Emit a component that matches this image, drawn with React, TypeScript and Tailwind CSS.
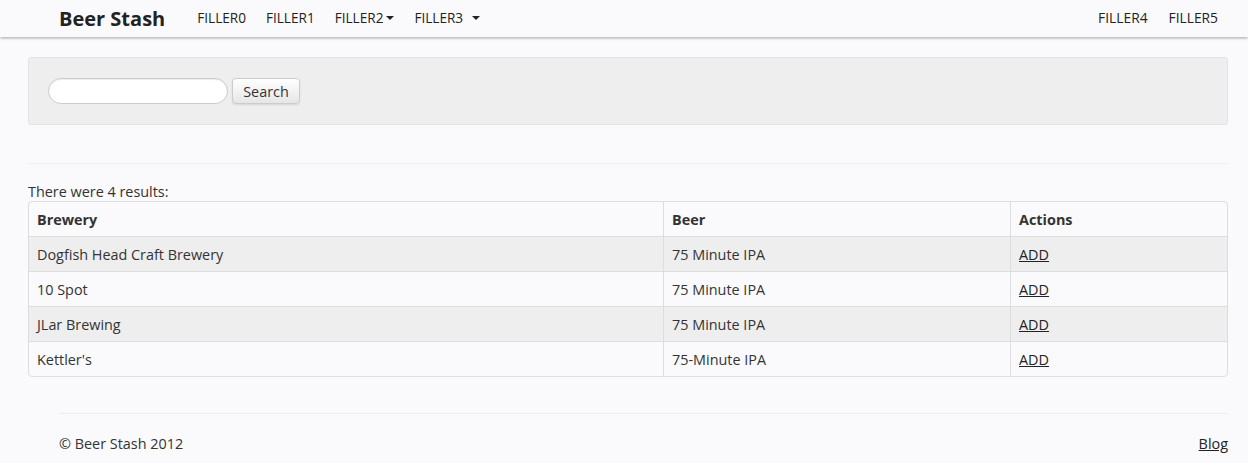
import React from "react";

const rows = [
  { brewery: "Dogfish Head Craft Brewery", beer: "75 Minute IPA" },
  { brewery: "10 Spot", beer: "75 Minute IPA" },
  { brewery: "JLar Brewing", beer: "75 Minute IPA" },
  { brewery: "Kettler's", beer: "75-Minute IPA" },
];

function Caret() {
  return <span className="ml-[3px] inline-block h-0 w-0 border-x-[4px] border-t-[4px] border-x-transparent border-t-[#222] align-middle" />;
}

export default function App() {
  return (
    <div className="min-h-[463px] bg-[#fafafc] text-[14.4px] text-[#333] [font-family:'Open_Sans','Noto_Sans',sans-serif]">
      <div className="h-[37px] bg-[#fafafc] shadow-[0_1px_3px_rgba(0,0,0,0.35)] flex items-center">
        <div className="flex w-full items-center pl-[59px] pr-[30px]">
          <span className="text-[20px] font-bold text-[#222] leading-none">Beer Stash</span>
          <nav className="ml-[32px] flex items-center gap-[20px] text-[13.6px] text-[#222]">
            <span>FILLER0</span>
            <span>FILLER1</span>
            <span className="flex items-center">FILLER2<Caret /></span>
            <span className="flex items-center">FILLER3<span className="ml-[6px] flex"><Caret /></span></span>
          </nav>
          <nav className="ml-auto flex items-center gap-[21px] text-[13.8px] text-[#222]">
            <span>FILLER4</span>
            <span>FILLER5</span>
          </nav>
        </div>
      </div>

      <div className="pl-[28px] pr-[20px]">
        <div className="mt-[20px] h-[68px] rounded-[3px] border border-[#e3e3e3] bg-[#eeeeee] flex items-center pl-[19px] gap-[4px]">
          <input className="h-[26px] w-[180px] rounded-full border border-[#ccc] bg-white shadow-[inset_0_1px_1px_rgba(0,0,0,0.075)]" />
          <button className="h-[26px] w-[68px] rounded-[4px] border border-[#ccc] bg-gradient-to-b from-white to-[#e6e6e6] pt-[2px] text-[14.4px] text-[#333] shadow-[0_1px_2px_rgba(0,0,0,0.1)]">Search</button>
        </div>

        <div className="mt-[38px] border-t border-[#eeeeee]" />

        <div className="mt-[19px] leading-[18px]">There were 4 results:</div>
        <table className="w-full border-separate border-spacing-0 rounded-[4px] border border-[#dddddd] text-left">
          <thead>
            <tr className="h-[34px]">
              <th className="w-[634px] px-[8px] pt-[2px] font-bold">Brewery</th>
              <th className="w-[347px] border-l border-[#dddddd] px-[8px] pt-[2px] font-bold">Beer</th>
              <th className="border-l border-[#dddddd] px-[8px] pt-[2px] font-bold">Actions</th>
            </tr>
          </thead>
          <tbody>
            {rows.map((r, i) => (
              <tr key={i} className={"h-[35px] " + (i % 2 === 0 ? "bg-[#eeeeee]" : "")}>
                <td className="border-t border-[#dddddd] px-[8px] pt-[2px]">{r.brewery}</td>
                <td className="border-t border-l border-[#dddddd] px-[8px] pt-[2px]">{r.beer}</td>
                <td className="border-t border-l border-[#dddddd] px-[8px] pt-[2px]"><a className="underline text-[#222]">ADD</a></td>
              </tr>
            ))}
          </tbody>
        </table>
      </div>

      <div className="ml-[58px] mr-[20px] mt-[36px] border-t border-[#eeeeee]" />
      <div className="ml-[59px] mr-[20px] flex items-center justify-between pt-[19px]">
        <span>© Beer Stash 2012</span>
        <a className="underline text-[#222]">Blog</a>
      </div>
    </div>
  );
}
